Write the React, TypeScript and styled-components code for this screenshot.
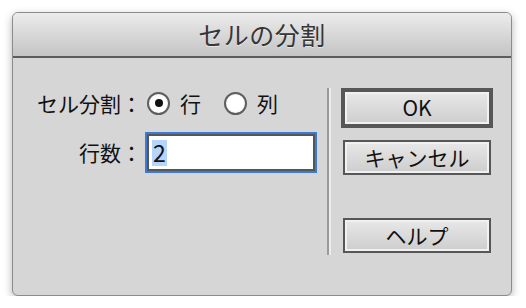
import styled, { createGlobalStyle } from 'styled-components';

const GlobalStyle = createGlobalStyle`
	html,
	body {
		margin: 0;
		padding: 0;
		background: #ffffff;
	}
	body {
		font-family: 'Noto Sans CJK JP', 'Noto Sans', sans-serif;
		color: #111;
	}
`;

const App = () => {
	return (
		<>
			<GlobalStyle />
			<StyledPage>
				<StyledWindow>
					<StyledTitleBar>セルの分割</StyledTitleBar>
					<StyledBody>
						<StyledForm>
							<StyledLabel>セル分割：</StyledLabel>
							<StyledRadioGroup>
								<StyledRadioOption>
									<StyledRadio $checked />
									<span>行</span>
								</StyledRadioOption>
								<StyledRadioOption>
									<StyledRadio />
									<span>列</span>
								</StyledRadioOption>
							</StyledRadioGroup>
							<StyledLabel>行数：</StyledLabel>
							<StyledInputFrame>
								<StyledInput>
									<StyledSelection>2</StyledSelection>
								</StyledInput>
							</StyledInputFrame>
						</StyledForm>
						<StyledDivider />
						<StyledButtons>
							<StyledButton $default>OK</StyledButton>
							<StyledButton>キャンセル</StyledButton>
							<StyledButton $spaced>ヘルプ</StyledButton>
						</StyledButtons>
					</StyledBody>
				</StyledWindow>
			</StyledPage>
		</>
	);
};

export default App;

const StyledPage = styled.div`
	padding: 12px 0 0 12px;
`;

const StyledWindow = styled.div`
	box-sizing: border-box;
	width: 500px;
	height: 284px;
	display: flex;
	flex-direction: column;
	border: 1px solid #8c8c8c;
	border-radius: 6px;
	background: #d6d6d6;
	box-shadow: 0 3px 9px rgba(0, 0, 0, 0.3);
	overflow: hidden;
`;

const StyledTitleBar = styled.div`
	height: 42px;
	display: flex;
	align-items: center;
	justify-content: center;
	background: linear-gradient(#ececec, #c4c4c4);
	border-bottom: 2px solid #5c5c5c;
	font-size: 25px;
	color: #363636;
	letter-spacing: 0.5px;
	padding-bottom: 1px;
	text-shadow: 0 1px 0 rgba(255, 255, 255, 0.5);
`;

const StyledBody = styled.div`
	flex: 1;
	display: flex;
	padding: 30px 17px 0 0;
`;

const StyledForm = styled.div`
	width: 314px;
	display: grid;
	grid-template-columns: 129px auto;
	grid-template-rows: 30px 41px;
	column-gap: 3px;
	row-gap: 14px;
	align-items: center;
	align-content: start;
	font-size: 21px;
`;

const StyledLabel = styled.div`
	justify-self: end;
	white-space: nowrap;
	line-height: 1;
`;

const StyledRadioGroup = styled.div`
	display: flex;
	align-items: center;
	gap: 23px;
	padding-left: 2px;
`;

const StyledRadioOption = styled.div`
	display: flex;
	align-items: center;
	gap: 10px;
	line-height: 1;
`;

const StyledRadio = styled.span<{ $checked?: boolean }>`
	box-sizing: border-box;
	width: 23px;
	height: 23px;
	border-radius: 50%;
	border: 2px solid #5e5e5e;
	background: radial-gradient(circle, #ffffff 55%, #e4e4e4 100%);
	display: flex;
	align-items: center;
	justify-content: center;
	&::after {
		content: '';
		display: ${(p) => (p.$checked ? 'block' : 'none')};
		width: 8px;
		height: 8px;
		border-radius: 50%;
		background: #111;
	}
`;

const StyledInputFrame = styled.div`
	box-sizing: border-box;
	width: 172px;
	height: 41px;
	border: 2px solid #3b7ad6;
`;

const StyledInput = styled.div`
	box-sizing: border-box;
	height: 100%;
	border: 2px solid #565656;
	background: #ffffff;
	display: flex;
	align-items: center;
	padding-left: 3px;
	font-size: 23px;
	line-height: 1;
`;

const StyledSelection = styled.span`
	background: #b5d5fd;
	padding: 1px 1px 2px;
`;

const StyledDivider = styled.div`
	width: 2px;
	height: 167px;
	background: #9a9a9a;
	border-right: 2px solid #ececec;
	margin-right: 10px;
`;

const StyledButtons = styled.div`
	width: 152px;
	display: flex;
	flex-direction: column;
	align-items: center;
`;

const StyledButton = styled.div<{ $default?: boolean; $spaced?: boolean }>`
	box-sizing: border-box;
	width: ${(p) => (p.$default ? '152px' : '148px')};
	height: ${(p) => (p.$default ? '40px' : '35px')};
	margin-top: ${(p) => (p.$default ? '0' : p.$spaced ? '43px' : '12px')};
	border: ${(p) => (p.$default ? '4px' : '2px')} solid #575757;
	background: linear-gradient(#e8e8e8, #cdcdcd);
	box-shadow: inset 0 0 0 2px #f1f1f1;
	display: flex;
	align-items: center;
	justify-content: center;
	font-size: 21px;
	line-height: 1;
	color: #111;
	padding-bottom: 1px;
`;
